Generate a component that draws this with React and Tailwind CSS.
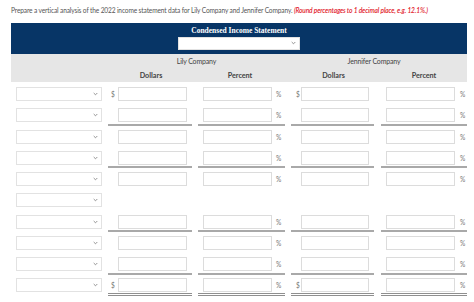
import React from 'react';

const rows = [
    { dollar: true, line: '' },
    { line: 'single' },
    { line: '' },
    { line: 'single' },
    { line: '' },
    { selectOnly: true },
    { line: 'single' },
    { line: '' },
    { line: 'single' },
    { dollar: true, line: 'double' },
];

function Chevron() {
    return (
        <svg width="5" height="4" viewBox="0 0 5 4" className="shrink-0">
            <path d="M0.7 1 L2.5 2.8 L4.3 1" fill="none" stroke="#777" strokeWidth="0.8" />
        </svg>
    );
}

function SelectBox({ className }) {
    return (
        <div className={`flex items-center justify-end bg-white border border-[#e2e2e2] pr-[3px] ${className}`}>
            <Chevron />
        </div>
    );
}

function Box({ className }) {
    return <div className={`h-[14px] bg-white border border-[#dcdcdc] ${className}`}></div>;
}

function Cell({ line, children, className }) {
    let border = '';
    if (line === 'single') border = 'border-b-2 border-[#a9a9a9]';
    if (line === 'double') border = 'border-b-[3px] border-double border-[#8f8f8f]';
    return <div className={`h-[17.5px] flex items-start ${border} ${className}`}>{children}</div>;
}

export default function App() {
    return (
        <div className="w-[474px] h-[302px] bg-white overflow-hidden px-[11px] pt-[6px]" style={{ fontFamily: 'Lato, "Open Sans", sans-serif' }}>
            <p className="text-[6.6px] leading-[8px] tracking-[-0.14px] text-[#555] whitespace-nowrap">
                Prepare a vertical analysis of the 2022 income statement data for Lily Company and Jennifer Company.{' '}
                <span className="text-[#e2232e] italic font-semibold">(Round percentages to 1 decimal place, e.g. 12.1%.)</span>
            </p>

            <div className="mt-[9px] w-[456px]">
                {/* navy title bar */}
                <div className="bg-[#073566] h-[31px] flex flex-col items-center pt-[3px]">
                    <div className="text-white font-bold text-[7.5px] leading-[9px]" style={{ fontFamily: '"Liberation Serif", serif' }}>
                        Condensed Income Statement
                    </div>
                    <SelectBox className="mt-[1.5px] w-[122px] h-[13px]" />
                </div>

                {/* gray column header */}
                <div className="bg-[#e6e6e6] h-[28px] grid grid-cols-[97px_177px_182px] text-[#444]">
                    <div></div>
                    <div className="flex flex-col">
                        <div className="text-center text-[7px] leading-[9px] tracking-[-0.15px] mt-[3px]">Lily Company</div>
                        <div className="grid grid-cols-[84px_6px_87px] mt-[5px] text-[7.2px] leading-[9px] font-bold">
                            <div className="text-center pl-[2px]">Dollars</div>
                            <div></div>
                            <div className="text-center pr-[3px]">Percent</div>
                        </div>
                    </div>
                    <div className="flex flex-col">
                        <div className="text-center text-[7px] leading-[9px] tracking-[-0.15px] mt-[3px] pr-[4px]">Jennifer Company</div>
                        <div className="grid grid-cols-[6px_83px_7px_86px] mt-[5px] text-[7.2px] leading-[9px] font-bold">
                            <div></div>
                            <div className="text-center pl-[2px]">Dollars</div>
                            <div></div>
                            <div className="text-center">Percent</div>
                        </div>
                    </div>
                </div>

                {/* body rows */}
                <div className="pt-[5px]">
                    {rows.map((r, i) => (
                        <div key={i} className="h-[21.25px] grid grid-cols-[97px_84px_6px_87px_6px_83px_7px_86px] text-[6.6px] text-[#777]">
                            <div className="pl-[5px]">
                                <SelectBox className="w-[86px] h-[14px]" />
                            </div>
                            {r.selectOnly ? null : (
                                <>
                                    <Cell line={r.line}>
                                        <span className="w-[10px] pl-[3px] leading-[14px]">{r.dollar ? '$' : ''}</span>
                                        <Box className="w-[69px]" />
                                    </Cell>
                                    <div></div>
                                    <Cell line={r.line} className="pl-[5px]">
                                        <Box className="w-[69px]" />
                                        <span className="pl-[4px] leading-[14px]">%</span>
                                    </Cell>
                                    <div></div>
                                    <Cell line={r.line}>
                                        <span className="w-[10px] pl-[5px] leading-[14px]">{r.dollar ? '$' : ''}</span>
                                        <Box className="w-[68px]" />
                                    </Cell>
                                    <div></div>
                                    <Cell line={r.line} className="pl-[5px]">
                                        <Box className="w-[69px]" />
                                        <span className="pl-[5px] leading-[14px]">%</span>
                                    </Cell>
                                </>
                            )}
                        </div>
                    ))}
                </div>
            </div>
        </div>
    );
}
